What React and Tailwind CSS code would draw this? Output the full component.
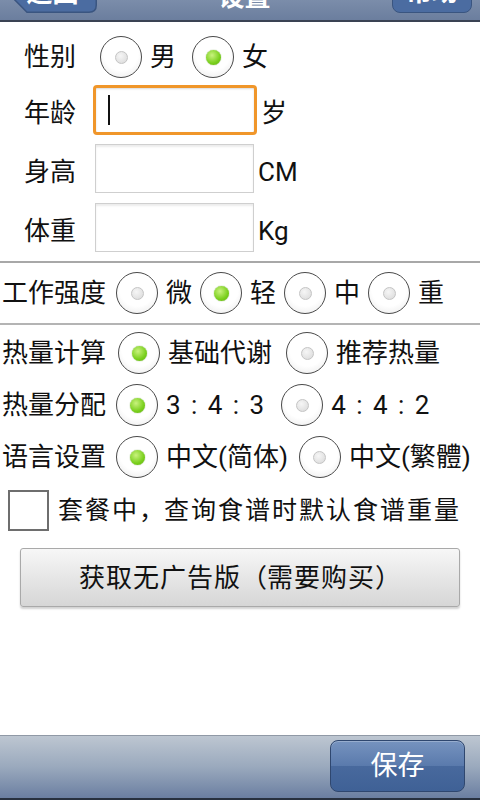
import React from 'react';

const Radio = ({ checked }) => (
    <span className="w-[42px] h-[42px] shrink-0 rounded-full border-[1.5px] border-[#4a4a4a] bg-[radial-gradient(circle_at_50%_40%,#ffffff_55%,#e6e6e6)] flex items-center justify-center">
        {checked ? (
            <span className="w-[15px] h-[15px] rounded-full bg-[radial-gradient(circle_at_40%_35%,#c9f27e,#79cf1c_60%,#5fae10)] shadow-[0_0_1px_#4a8a10]" />
        ) : (
            <span className="w-[13px] h-[13px] rounded-full border border-[#c4c4c4] bg-[radial-gradient(circle_at_40%_35%,#f6f6f6,#d8d8d8)]" />
        )}
    </span>
);

const Option = ({ checked, label, className, textClass }) => (
    <div className={`flex items-center ${className || ''}`}>
        <Radio checked={checked} />
        <span className={`ml-[8px] whitespace-nowrap ${textClass || ''}`}>{label}</span>
    </div>
);

const Field = ({ label, unit, focused, className }) => (
    <div className={`flex items-center pl-[24px] ${className}`}>
        <span className="w-[52px] mt-[6px]">{label}</span>
        {focused ? (
            <div className="ml-[17px] w-[164px] h-[50px] rounded-[4px] border-[3px] border-[#f0962a] bg-white shadow-[inset_0_1px_2px_rgba(0,0,0,0.15)] flex items-center">
                <span className="ml-[12px] w-[2px] h-[30px] bg-[#111]" />
            </div>
        ) : (
            <div className="ml-[19px] w-[159px] h-[49px] border border-[#cfcfcf] bg-white shadow-[inset_0_2px_2px_rgba(0,0,0,0.08)]" />
        )}
        <span className="ml-[4px] mt-[6px]">{unit}</span>
    </div>
);

const ChoiceRow = ({ label, children, className }) => (
    <div className={`flex items-center pl-[2px] ${className}`}>
        <span className="w-[114px] whitespace-nowrap">{label}</span>
        {children}
    </div>
);

export default function App() {
    return (
        <div className="w-[480px] h-[800px] bg-white flex flex-col text-[26px] leading-none text-[#111] font-['Roboto','Noto_Sans_CJK_SC',sans-serif] overflow-hidden">
            {/* title bar, scrolled mostly out of view */}
            <div className="h-[22px] shrink-0 overflow-hidden flex flex-col justify-end border-b-2 border-[#3a4353]">
                <div className="h-[68px] shrink-0 bg-linear-to-b from-[#a3b1c6] to-[#6b7e9e] flex items-end justify-between pl-[2px] pr-[8px] pb-[7px] text-white text-[26px] font-bold">
                    <div className="relative w-[95px] h-[50px] flex items-end justify-center pb-[7px]">
                        <svg className="absolute inset-0" width="95" height="50" viewBox="0 0 95 50">
                            <path
                                d="M25 0.75 H87 Q94.25 0.75 94.25 8 V42 Q94.25 49.25 87 49.25 H25 L1 25 Z"
                                fill="#4b6ca1"
                                stroke="#3a5580"
                                strokeWidth="1.5"
                            />
                        </svg>
                        <span className="relative ml-[6px]">返回</span>
                    </div>
                    <span className="mb-[3px]">设置</span>
                    <div className="w-[80px] h-[50px] rounded-[8px] bg-[#4b6ca1] border-[1.5px] border-[#3a5580] flex items-end justify-center pb-[7px]">
                        帮助
                    </div>
                </div>
            </div>

            <div className="flex-1 flex flex-col">
                <div className="mt-[13px] h-[44px] flex items-center pl-[24px]">
                    <span className="w-[52px]">性别</span>
                    <Option className="ml-[24px]" label="男" />
                    <Option className="ml-[16px]" checked label="女" />
                </div>

                <Field className="mt-[6px] h-[50px]" label="年龄" unit="岁" focused />
                <Field className="mt-[9px] h-[49px]" label="身高" unit="CM" />
                <Field className="mt-[10px] h-[49px]" label="体重" unit="Kg" />

                <div className="mt-[9px] h-[2px] bg-[#a8a8a8]" />

                <ChoiceRow className="h-[60px]" label="工作强度">
                    <Option label="微" />
                    <Option className="ml-[8px]" checked label="轻" />
                    <Option className="ml-[8px]" label="中" />
                    <Option className="ml-[8px]" label="重" />
                </ChoiceRow>

                <div className="h-[2px] bg-[#b4b4b4]" />

                <ChoiceRow className="mt-[2px] h-[52px]" label="热量计算">
                    <Option className="ml-[2px]" checked label="基础代谢" />
                    <Option className="ml-[14px]" label="推荐热量" />
                </ChoiceRow>
                <ChoiceRow className="h-[52px]" label="热量分配">
                    <Option checked label="3 : 4 : 3" textClass="tracking-[2px]" />
                    <Option className="ml-[15px]" label="4 : 4 : 2" textClass="tracking-[2px]" />
                </ChoiceRow>
                <ChoiceRow className="h-[52px]" label="语言设置">
                    <Option checked label="中文(简体)" />
                    <Option className="ml-[11px]" label="中文(繁體)" />
                </ChoiceRow>

                <div className="mt-[7px] flex items-center pl-[8px]">
                    <span className="w-[41px] h-[41px] border-2 border-[#6e6e6e] bg-white" />
                    <span className="ml-[9px] whitespace-nowrap text-[25px] tracking-[2px]">
                        套餐中<span className="inline-block w-[25px] text-center">，</span>查询食谱时默认食谱重量
                    </span>
                </div>

                <button className="mt-[17px] mx-[20px] w-[440px] h-[59px] rounded-[3px] border border-[#a9a9a9] bg-linear-to-b from-[#f7f7f7] to-[#d6d6d6] shadow-[0_2px_2px_rgba(0,0,0,0.18)] text-[26px] text-[#111] whitespace-nowrap tracking-[1px]">
                    获取无广告版<span className="inline-block w-[26px] text-right">（</span>需要购买<span className="inline-block w-[26px] text-left">）</span>
                </button>
            </div>

            {/* bottom bar */}
            <div className="h-[65px] shrink-0 border-t border-[#9099a6] border-b-2 border-b-[#28313f] bg-linear-to-b from-[#bdc6d1] via-[#9aa9bd] to-[#6b7fa1] flex justify-end pt-[4px] pr-[15px]">
                <button className="w-[135px] h-[52px] rounded-[8px] border border-[#2f476f] bg-[linear-gradient(to_bottom,#7693bf,#5a7aac_50%,#48699d_51%,#3f6196)] text-white text-[27px] shadow-[inset_0_1px_0_rgba(255,255,255,0.25)]">
                    保存
                </button>
            </div>
        </div>
    );
}
